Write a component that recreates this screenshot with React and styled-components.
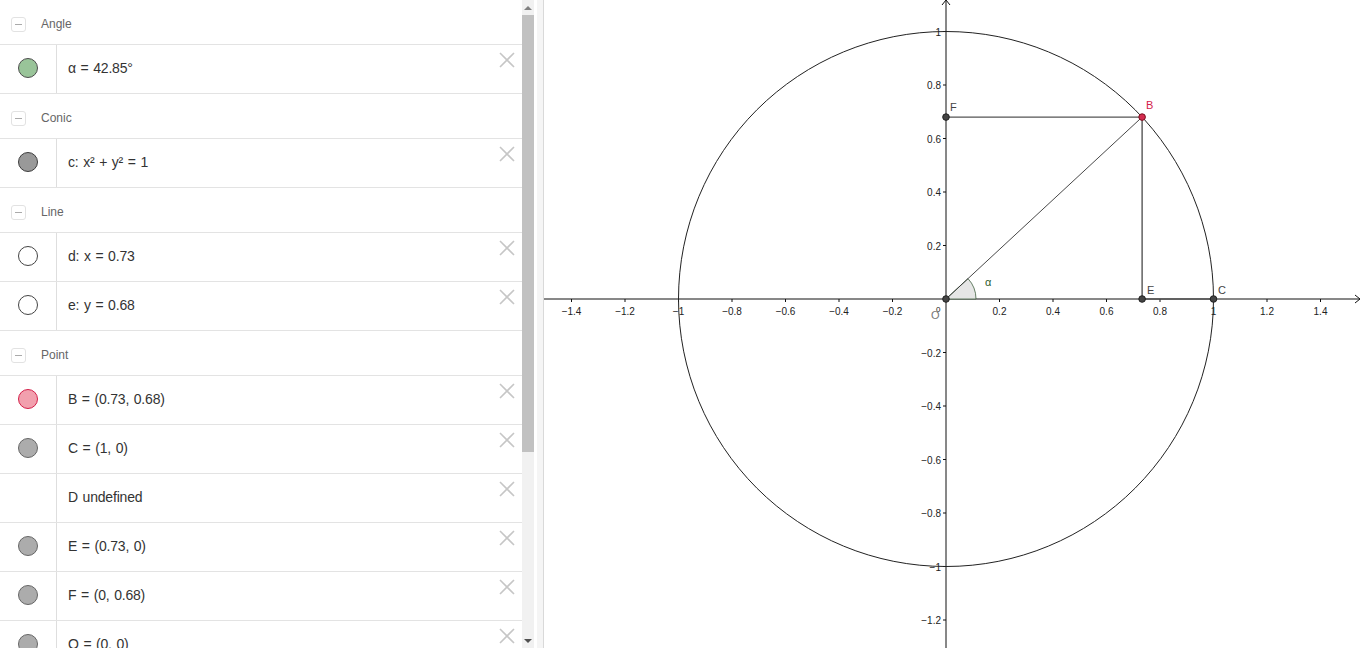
import React from "react";
import styled, { createGlobalStyle } from "styled-components";

const GlobalStyle = createGlobalStyle`
  html, body {
    margin: 0;
    padding: 0;
    overflow: hidden;
    background: #fff;
  }
  body {
    font-family: "Liberation Sans", Arial, sans-serif;
  }
`;

const Page = styled.div`
  display: flex;
  width: 1362px;
  height: 648px;
  overflow: hidden;
`;

const Sidebar = styled.div`
  display: flex;
  width: 537px;
  height: 648px;
  padding-right: 3px;
  box-sizing: border-box;
  flex-shrink: 0;
`;

const List = styled.div`
  width: 522px;
  height: 648px;
  overflow: hidden;
`;

const GroupHeader = styled.div`
  display: flex;
  align-items: center;
  height: 40px;
  padding: 4px 0 0 11px;
  border-bottom: 1px solid #e3e3e3;
  color: #666;
  font-size: 12px;
`;

const Collapse = styled.span`
  position: relative;
  width: 13px;
  height: 13px;
  margin-right: 15px;
  border: 1px solid #e2e2e2;
  border-radius: 3px;
  &::after {
    content: "";
    position: absolute;
    left: 3px;
    right: 3px;
    top: 6px;
    height: 1px;
    background: #aaa;
  }
`;

const Row = styled.div`
  position: relative;
  display: flex;
  height: 48px;
  border-bottom: 1px solid #e3e3e3;
`;

const Marble = styled.div`
  display: flex;
  align-items: center;
  justify-content: center;
  width: 57px;
  padding: 0 1px 3px 0;
  box-sizing: border-box;
  border-right: 1px solid #dedede;
  flex-shrink: 0;
`;

const Dot = styled.span`
  width: 18px;
  height: 18px;
  border-radius: 50%;
  background: ${(p) => p.$fill};
  border: 1px solid ${(p) => p.$stroke};
`;

const Formula = styled.div`
  display: flex;
  align-items: center;
  padding: 0 0 3px 11px;
  font-size: 14px;
  color: #333;
  letter-spacing: -0.2px;
  word-spacing: 1px;
  white-space: pre;
`;

const DeleteButton = styled.svg`
  position: absolute;
  top: 7px;
  right: 7px;
  width: 16px;
  height: 16px;
`;

const Scrollbar = styled.div`
  display: flex;
  flex-direction: column;
  width: 12px;
  background: #f1f1f1;
`;

const ArrowBox = styled.div`
  display: flex;
  align-items: center;
  justify-content: center;
  height: 15px;
  margin-top: ${(p) => (p.$bottom ? "auto" : "0")};
  &::before {
    content: "";
    border-left: 4px solid transparent;
    border-right: 4px solid transparent;
    ${(p) =>
      p.$bottom
        ? "border-top: 4px solid #505050;"
        : "border-bottom: 4px solid #808080;"}
  }
`;

const Thumb = styled.div`
  height: 437px;
  background: #c1c1c1;
`;

const Splitter = styled.div`
  width: 6px;
  height: 648px;
  background: #f5f5f5;
  border-right: 1px solid #d9d9d9;
  flex-shrink: 0;
`;

const Graphics = styled.div`
  flex: 1;
  height: 648px;
`;

const groups = [
  {
    title: "Angle",
    items: [{ text: "α = 42.85°", fill: "#99c499", stroke: "#4d4d4d" }],
  },
  {
    title: "Conic",
    items: [{ text: "c: x² + y² = 1", fill: "#999999", stroke: "#3d3d3d" }],
  },
  {
    title: "Line",
    items: [
      { text: "d: x = 0.73", fill: "#ffffff", stroke: "#444" },
      { text: "e: y = 0.68", fill: "#ffffff", stroke: "#444" },
    ],
  },
  {
    title: "Point",
    items: [
      { text: "B = (0.73, 0.68)", fill: "#f2a0ae", stroke: "#d4204a" },
      { text: "C = (1, 0)", fill: "#acacac", stroke: "#666" },
      { text: "D undefined" },
      { text: "E = (0.73, 0)", fill: "#acacac", stroke: "#666" },
      { text: "F = (0, 0.68)", fill: "#acacac", stroke: "#666" },
      { text: "O = (0, 0)", fill: "#acacac", stroke: "#666" },
    ],
  },
];

function Cross() {
  return (
    <DeleteButton viewBox="0 0 16 16">
      <path d="M1 1 L15 15 M15 1 L1 15" stroke="#c6c6c6" strokeWidth="1.6" />
    </DeleteButton>
  );
}

const S = 267.5;
const OX = 946;
const OY = 299;
const px = (v) => OX + v * S;
const py = (v) => OY - v * S;
const fmt = (v) => (v < 0 ? "\u2212" + Math.abs(v).toFixed(1) : v.toFixed(1)).replace(/\.0$/, "");

function Plot() {
  const xs = [-1.4, -1.2, -1, -0.8, -0.6, -0.4, -0.2, 0.2, 0.4, 0.6, 0.8, 1, 1.2, 1.4];
  const ys = [-1.2, -1, -0.8, -0.6, -0.4, -0.2, 0.2, 0.4, 0.6, 0.8, 1];
  const a = (42.85 * Math.PI) / 180;
  const bx = px(Math.cos(a));
  const by = py(Math.sin(a));
  const r = 30;
  return (
    <svg width="818" height="648" viewBox="544 0 818 648" style={{ display: "block" }}>
      <g fontFamily="Liberation Sans, Arial, sans-serif" fontSize="10" fill="#222">
        {/* axes */}
        <line x1="544" y1={OY} x2="1360" y2={OY} stroke="#111" strokeWidth="1" />
        <path d="M1355 295 L1360 299 L1355 303" fill="none" stroke="#111" />
        <line x1={OX} y1="0" x2={OX} y2="648" stroke="#111" strokeWidth="1" />
        <path d="M942 5 L946 0 L950 5" fill="none" stroke="#111" />
        {xs.map((v) => (
          <g key={"x" + v}>
            <line x1={px(v)} y1={OY} x2={px(v)} y2={OY + 3} stroke="#111" />
            <text x={px(v)} y={OY + 16} textAnchor="middle">{fmt(v)}</text>
          </g>
        ))}
        {ys.map((v) => (
          <g key={"y" + v}>
            <line x1={OX - 3} y1={py(v)} x2={OX} y2={py(v)} stroke="#111" />
            <text x={OX - 5} y={py(v) + 4} textAnchor="end">{fmt(v)}</text>
          </g>
        ))}
        <text x={OX - 10} y={OY + 13} fontSize="8">0</text>

        {/* unit circle */}
        <circle cx={OX} cy={OY} r={S} fill="none" stroke="#222" strokeWidth="1" />

        {/* angle */}
        <path
          d={`M${OX} ${OY} L${OX + r} ${OY} A${r} ${r} 0 0 0 ${OX + r * Math.cos(a)} ${OY - r * Math.sin(a)} Z`}
          fill="#e6e6e6"
          stroke="#3f5f3f"
          strokeWidth="0.8"
        />
        <text x="985" y="286" fontSize="11" fill="#2f5e2f">α</text>

        {/* segments */}
        <line x1={OX} y1={OY} x2={bx} y2={by} stroke="#333" strokeWidth="0.9" />
        <line x1={OX} y1={by} x2={bx} y2={by} stroke="#555" strokeWidth="1.4" />
        <line x1={bx} y1={by} x2={bx} y2={OY} stroke="#555" strokeWidth="1.4" />
        <line x1={bx} y1={OY} x2={px(1)} y2={OY} stroke="#555" strokeWidth="1.4" />

        {/* points */}
        <circle cx={OX} cy={by} r="3.3" fill="#444" stroke="#222" />
        <circle cx={bx} cy={OY} r="3.3" fill="#444" stroke="#222" />
        <circle cx={px(1)} cy={OY} r="3.3" fill="#444" stroke="#222" />
        <circle cx={OX} cy={OY} r="3.3" fill="#444" stroke="#222" />
        <circle cx={bx} cy={by} r="3.3" fill="#d42b4f" stroke="#7a1020" />

        <g fontSize="11" fill="#444">
          <text x="950" y="111">F</text>
          <text x="1146" y="109" fill="#d4204a">B</text>
          <text x="1147" y="294">E</text>
          <text x="1218" y="294">C</text>
          <text x="931" y="319" fill="#777">O</text>
        </g>
      </g>
    </svg>
  );
}

export default function App() {
  return (
    <>
      <GlobalStyle />
      <Page>
        <Sidebar>
          <List>
            {groups.map((g) => (
              <React.Fragment key={g.title}>
                <GroupHeader>
                  <Collapse />
                  {g.title}
                </GroupHeader>
                {g.items.map((it) => (
                  <Row key={it.text}>
                    <Marble>{it.fill && <Dot $fill={it.fill} $stroke={it.stroke} />}</Marble>
                    <Formula>{it.text}</Formula>
                    <Cross />
                  </Row>
                ))}
              </React.Fragment>
            ))}
          </List>
          <Scrollbar>
            <ArrowBox />
            <Thumb />
            <ArrowBox $bottom />
          </Scrollbar>
        </Sidebar>
        <Splitter />
        <Graphics>
          <Plot />
        </Graphics>
      </Page>
    </>
  );
}
